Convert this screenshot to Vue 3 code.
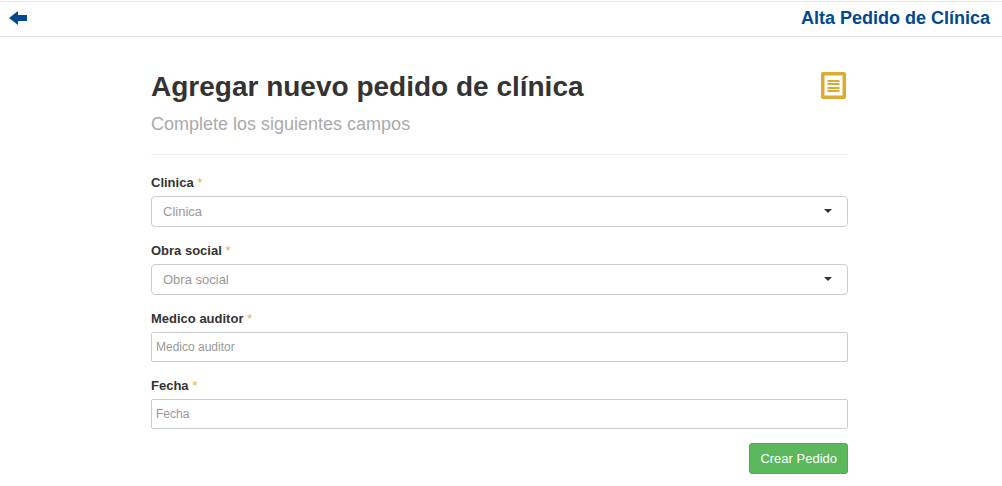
<script setup>
import { ref } from 'vue'

const clinica = ref('')
const obraSocial = ref('')
const medico = ref('')
const fecha = ref('')
</script>

<template>
  <div class="page">
    <header class="topbar">
      <a class="back" href="#" aria-label="Volver">
        <svg width="18" height="14" viewBox="0 0 18 14" aria-hidden="true">
          <path d="M0 7L9 0V4H18V10H9V14Z" fill="#004990" />
        </svg>
      </a>
      <span class="topbar-title">Alta Pedido de Clínica</span>
    </header>

    <div class="body">
      <main class="content">
        <div class="heading">
          <div>
            <h1>Agregar nuevo pedido de clínica</h1>
            <p>Complete los siguientes campos</p>
          </div>
          <svg class="heading-icon" width="25" height="27" viewBox="0 0 25 27" aria-hidden="true">
            <path d="M2 0H23Q25 0 25 2V25Q25 27 23 27H2Q0 27 0 25V2Q0 0 2 0ZM3.5 3.5V23.5H21.5V3.5Z" fill="#dbab34" fill-rule="evenodd" />
            <path d="M6.5 9H18.5M6.5 12H18.5M6.5 16H18.5M6.5 19H18.5" stroke="#dbab34" stroke-width="2" />
          </svg>
        </div>

        <form @submit.prevent>
          <div class="field">
            <label for="clinica">Clinica <span class="required">*</span></label>
            <div class="select">
              <select id="clinica" v-model="clinica">
                <option value="">Clinica</option>
              </select>
            </div>
          </div>
          <div class="field">
            <label for="obra-social">Obra social <span class="required">*</span></label>
            <div class="select">
              <select id="obra-social" v-model="obraSocial">
                <option value="">Obra social</option>
              </select>
            </div>
          </div>
          <div class="field">
            <label for="medico">Medico auditor <span class="required">*</span></label>
            <input id="medico" v-model="medico" type="text" placeholder="Medico auditor" />
          </div>
          <div class="field">
            <label for="fecha">Fecha <span class="required">*</span></label>
            <input id="fecha" v-model="fecha" type="text" placeholder="Fecha" />
          </div>
          <div class="actions">
            <button type="submit">Crear Pedido</button>
          </div>
        </form>
      </main>
    </div>
  </div>
</template>

<style>
body {
  background: #fff;
}
</style>

<style scoped>
.page,
.page * {
  box-sizing: border-box;
}

.page {
  padding-top: 1px;
  font-family: "Liberation Sans", Arial, sans-serif;
  font-size: 13px;
  line-height: 20px;
  color: #333;
}

.topbar {
  display: flex;
  align-items: center;
  justify-content: space-between;
  height: 36px;
  padding: 0 12px 2px 9px;
  border-top: 1px solid #e5e5e5;
  border-bottom: 1px solid #e1e1e1;
}

.back {
  display: flex;
}

.topbar-title {
  font-size: 18px;
  font-weight: bold;
  color: #004990;
}

.body {
  padding: 34px 3px 12px 0;
}

.content {
  width: 70%;
  max-width: 697px;
  margin: 0 auto;
}

.heading {
  display: flex;
  justify-content: space-between;
  align-items: flex-start;
  padding-bottom: 18px;
  border-bottom: 1px solid #eee;
}

.heading-icon {
  margin: 1px 2px 0 0;
}

h1 {
  margin: 0;
  font-size: 28px;
  line-height: 32px;
}

p {
  margin: 9px 0 0;
  font-size: 18px;
  line-height: 24px;
  color: #aaa;
}

form {
  padding-top: 18px;
}

.field {
  margin-bottom: 14px;
}

label {
  display: block;
  margin-bottom: 3px;
  font-weight: bold;
}

.required {
  font-weight: normal;
  color: #e8b23a;
}

.select {
  position: relative;
}

.select::after {
  content: "";
  position: absolute;
  top: 13px;
  right: 16px;
  border: 4px solid transparent;
  border-top-color: #333;
  border-bottom: 0;
  pointer-events: none;
}

select,
input {
  display: block;
  width: 100%;
  margin: 0;
  border: 1px solid #ccc;
  background: #fff;
  font: inherit;
}

select {
  height: 31px;
  appearance: none;
  padding: 0 32px 0 11px;
  border-radius: 4px;
  color: #999;
}

input {
  height: 30px;
  padding: 0 4px;
  border-radius: 2px;
  font-size: 12px;
  color: #555;
}

input::placeholder {
  color: #999;
  opacity: 1;
}

.actions {
  display: flex;
  justify-content: flex-end;
}

button {
  height: 31px;
  padding: 0 10px;
  border: 1px solid #4cae4c;
  border-radius: 3px;
  background: #5cb85c;
  color: #fff;
  font: inherit;
  cursor: pointer;
}
</style>
